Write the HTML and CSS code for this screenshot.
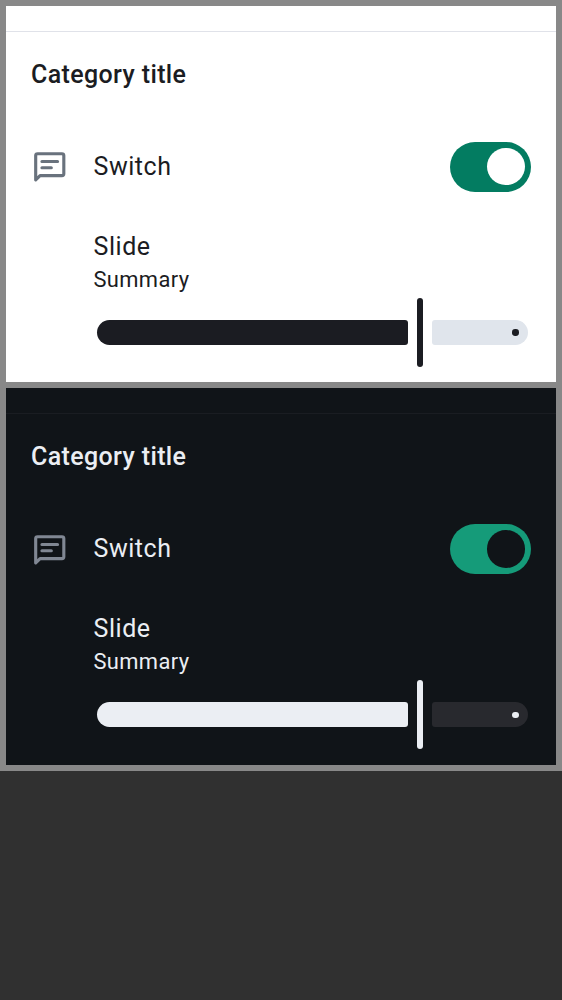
FILE: index.html
```html
<!DOCTYPE html>
<html lang="en">
<head>
<meta charset="utf-8">
<title>Preferences</title>
<link rel="stylesheet" href="styles.css">
</head>
<body>
<main class="board">
  <section class="panel light">
    <h2 class="category">Category title</h2>
    <div class="row">
      <svg class="icon" viewBox="0 0 24 24" fill="none" stroke="currentColor" stroke-width="2" stroke-linecap="round" stroke-linejoin="round"><path d="M3 19.8V4.2Q3 3 4.2 3H19.8Q21 3 21 4.2V15.8Q21 17 19.8 17H5.8Z"/><path d="M7 8H17M7 12H13"/></svg>
      <span class="label">Switch</span>
      <span class="switch"><span class="thumb"></span></span>
    </div>
    <div class="slide">
      <div class="label">Slide</div>
      <div class="summary">Summary</div>
      <div class="slider"><span class="active"></span><span class="handle"></span><span class="rest"><span class="dot"></span></span></div>
    </div>
  </section>
  <section class="panel dark">
    <h2 class="category">Category title</h2>
    <div class="row">
      <svg class="icon" viewBox="0 0 24 24" fill="none" stroke="currentColor" stroke-width="2" stroke-linecap="round" stroke-linejoin="round"><path d="M3 19.8V4.2Q3 3 4.2 3H19.8Q21 3 21 4.2V15.8Q21 17 19.8 17H5.8Z"/><path d="M7 8H17M7 12H13"/></svg>
      <span class="label">Switch</span>
      <span class="switch"><span class="thumb"></span></span>
    </div>
    <div class="slide">
      <div class="label">Slide</div>
      <div class="summary">Summary</div>
      <div class="slider"><span class="active"></span><span class="handle"></span><span class="rest"><span class="dot"></span></span></div>
    </div>
  </section>
</main>
</body>
</html>
```
FILE: styles.css
```css
* { box-sizing: border-box; }
body {
  margin: 0;
  background: #303030;
  font-family: Roboto, sans-serif;
}
.board {
  display: grid;
  gap: 6.2px;
  height: 771px;
  padding: 6px;
  background: #888888;
  align-content: start;
}
.panel {
  height: 376.2px;
  padding-top: 25px;
  background: var(--bg);
  color: var(--ink);
}
.light {
  --bg: #ffffff;
  --ink: #1b1c22;
  --line: #e0e2e9;
  --icon: #69727d;
  --accent: #037c61;
  --track: #e0e5ec;
}
.dark {
  --bg: #101418;
  --ink: #ebeef3;
  --line: #1a1d22;
  --icon: #808793;
  --accent: #159b79;
  --track: #28292e;
  height: 376.6px;
}
.category {
  height: 86px;
  margin: 0;
  padding: 0 25px;
  border-top: 1px solid var(--line);
  font-size: 25px;
  font-weight: 500;
  line-height: 86px;
  letter-spacing: 0.37px;
}
.row {
  display: flex;
  align-items: center;
  height: 99px;
  padding: 0 25px;
}
.icon {
  width: 37.5px;
  height: 37.5px;
  margin: 3px 25px 0 0;
  color: var(--icon);
}
.label {
  font-size: 25px;
  line-height: 36px;
  letter-spacing: 0.55px;
}
.switch {
  display: flex;
  align-items: center;
  justify-content: flex-end;
  width: 81.5px;
  height: 50px;
  margin-left: auto;
  padding-right: 6.5px;
  border-radius: 25px;
  background: var(--accent);
}
.thumb {
  width: 37.5px;
  height: 37.5px;
  border-radius: 50%;
  background: var(--bg);
}
.slide { padding: 13px 28px 0 87.5px; }
.summary {
  font-size: 21.9px;
  line-height: 30px;
  letter-spacing: 0.36px;
}
.slider {
  display: flex;
  align-items: center;
  height: 69px;
  margin: 3px 0 0 3.5px;
}
.active {
  width: 310.5px;
  height: 25px;
  border-radius: 12.5px 3px 3px 12.5px;
  background: var(--ink);
}
.handle {
  width: 6px;
  height: 69px;
  margin: 0 9px 0 9.5px;
  border-radius: 3px;
  background: var(--ink);
}
.rest {
  display: flex;
  flex: 1;
  align-items: center;
  justify-content: flex-end;
  height: 25px;
  padding-right: 9.5px;
  border-radius: 3px 12.5px 12.5px 3px;
  background: var(--track);
}
.dot {
  width: 6.3px;
  height: 6.3px;
  border-radius: 50%;
  background: var(--ink);
}
```
